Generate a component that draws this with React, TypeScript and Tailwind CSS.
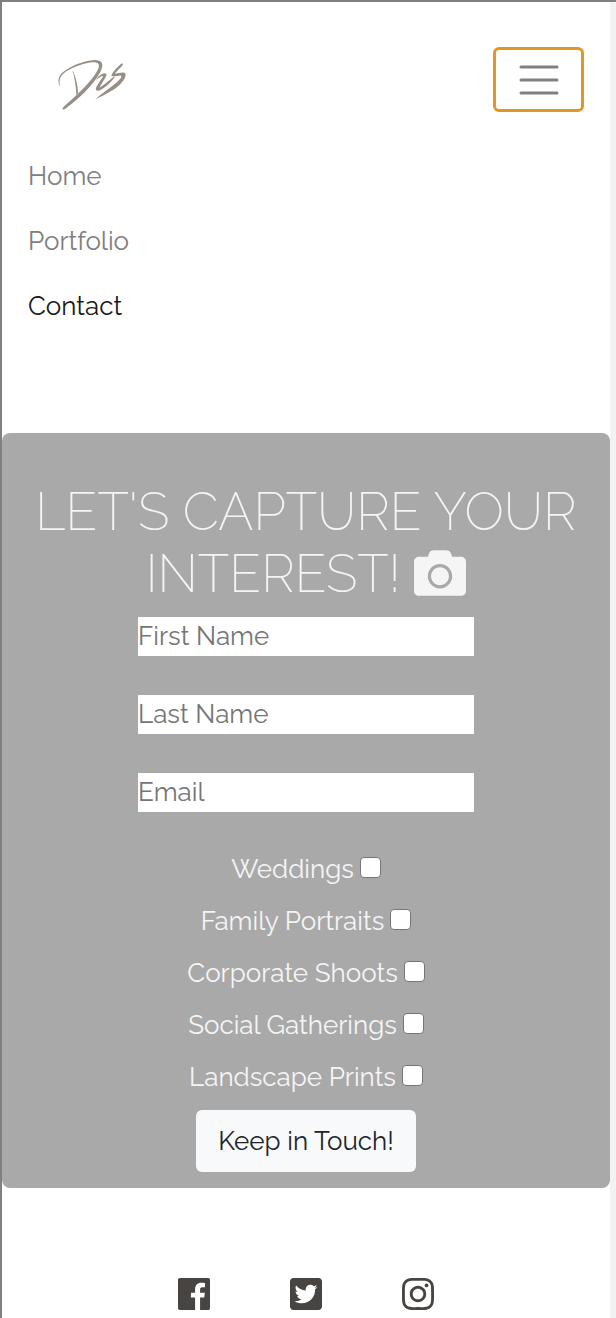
import { FaCamera, FaInstagram, FaTwitterSquare } from "react-icons/fa";

const links = [
  { label: "Home", active: false },
  { label: "Portfolio", active: false },
  { label: "Contact", active: true },
];

const fields = [
  { id: "first-name", label: "First Name", type: "text" },
  { id: "last-name", label: "Last Name", type: "text" },
  { id: "email", label: "Email", type: "email" },
];

const interests = [
  "Weddings",
  "Family Portraits",
  "Corporate Shoots",
  "Social Gatherings",
  "Landscape Prints",
];

function Signature() {
  return (
    <svg viewBox="0 0 110 75" className="h-[75px] w-[110px]" aria-hidden="true">
      <g fill="#978f86">
        <path d="M20.5 42C17 37 17.5 30 26 25C36 18.500 50 14.500 57 15.200C63.500 16 63.500 21 60 27.500C54 39 40 53 25 64C22 65.500 21.500 64 24 61.500C38 49 52 36 58 24.500C60.500 19 58 17 53 17.200C45 17.500 34 21.500 26 26.500C19.500 31 18.500 36 20.500 42Z" />
        <path d="M32.300 25C35 30 37.800 38 38 48L36.300 50C36 40 34.500 32 32.300 25Z" />
        <path d="M56 35C58 31 62.500 27.800 65 28.200C67.300 29 66.500 31 64.500 34L59.500 42.500C63 41 68 36 74 31.500C75.500 31.500 74 33.500 72 35.500C67 41 61.500 45.500 58 45.700C55 45.500 55.500 43 57.500 40L63.300 31C61 31 59 33 56 35Z" />
        <path d="M71.500 31C71 29 77 22 81.500 18.500C83.500 18 83 20 82 21L74.800 28.500C78.500 28.500 83 26.500 85 28C87 31 83.500 36 79.500 40C73 46 64 50 55 54.500C61 48.500 70 43.500 76.500 37.500C80.500 34 82.500 31 80.500 30.500C77.500 30.500 74 32 71.500 31Z" />
      </g>
    </svg>
  );
}

function FacebookSquare() {
  return (
    <svg viewBox="0 32 448 448" className="size-8" fill="currentColor" aria-hidden="true">
      <path d="M448 56.7v398.5c0 13.7-11.1 24.7-24.7 24.7H309.1V306.5h58.2l8.7-67.6h-67v-43.2c0-19.6 5.4-32.9 33.5-32.9h35.8v-60.5c-6.2-.8-27.4-2.7-52.2-2.7-51.6 0-87 31.5-87 89.4v49.9h-58.4v67.6h58.4V480H24.7C11.1 480 0 468.9 0 455.3V56.7C0 43.1 11.1 32 24.7 32h398.5c13.7 0 24.8 11.1 24.8 24.7z" />
    </svg>
  );
}

export default function App() {
  return (
    <div className="min-h-screen border-t-2 border-l-2 border-[#808080] bg-[#f2f2f2] pr-1.5 font-[Raleway,Lato,sans-serif] text-[26px] leading-[39px]">
      <div className="min-h-screen bg-white">
        <header className="pt-[43px]">
          <div className="flex items-start justify-between pr-[26px] pl-[38px]">
            <a href="#home" aria-label="Home page">
              <Signature />
            </a>
            <button
              type="button"
              aria-label="Toggle navigation"
              aria-expanded="true"
              className="mt-0.5 flex h-[65px] w-[91px] items-center justify-center rounded-md border-3 border-[#e39625]"
            >
              <svg viewBox="0 0 40 30" className="h-[30px] w-10" stroke="#808080" strokeWidth="3" strokeLinecap="round" aria-hidden="true">
                <path d="M2 2h36M2 15h36M2 28h36" />
              </svg>
            </button>
          </div>
          <nav className="mt-6 flex flex-col px-[26px]">
            {links.map((link) => (
              <a
                key={link.label}
                href={"#" + link.label.toLowerCase()}
                className={link.active ? "py-[13px] text-[#1a1a1a]" : "py-[13px] text-[#808080]"}
              >
                {link.label}
              </a>
            ))}
          </nav>
        </header>

        <main className="mt-[94px] rounded-lg bg-[#a9a9a9] px-6 pt-12 pb-4 text-center text-[#f5f5f5]">
          <h1 className="mb-3 text-[52px] leading-[62px] font-extralight">
            LET'S CAPTURE YOUR INTEREST! <FaCamera className="inline size-[52px] align-[-7px]" />
          </h1>
          <form className="flex flex-col items-center">
            <div className="flex w-3/5 flex-col gap-[39px]">
              {fields.map((field) => (
                <input
                  key={field.id}
                  id={field.id}
                  type={field.type}
                  aria-label={field.label}
                  placeholder={field.label}
                  className="h-[39px] w-full bg-white text-[#212529] placeholder:text-[#757575]"
                />
              ))}
            </div>
            <div className="mt-[31px] mb-[7px] flex flex-col items-center">
              {interests.map((interest) => (
                <label key={interest} className="flex h-[52px] items-center gap-1.5">
                  {interest}
                  <input
                    type="checkbox"
                    className="mb-1 size-[21px] appearance-none rounded-[4px] border border-[#767676] bg-white checked:bg-[#767676]"
                  />
                </label>
              ))}
            </div>
            <button type="submit" className="h-[62px] rounded-md bg-[#f8f9fa] px-[22px] text-[#212529]">
              Keep in Touch!
            </button>
          </form>
        </main>

        <footer className="flex justify-center gap-20 pt-[90px] text-[#484442]">
          <a href="#facebook" aria-label="Facebook">
            <FacebookSquare />
          </a>
          <a href="#twitter" aria-label="Twitter">
            <FaTwitterSquare className="size-8" viewBox="0 32 448 448" />
          </a>
          <a href="#instagram" aria-label="Instagram">
            <FaInstagram className="size-8" viewBox="0 32 448 448" />
          </a>
        </footer>
      </div>
    </div>
  );
}
